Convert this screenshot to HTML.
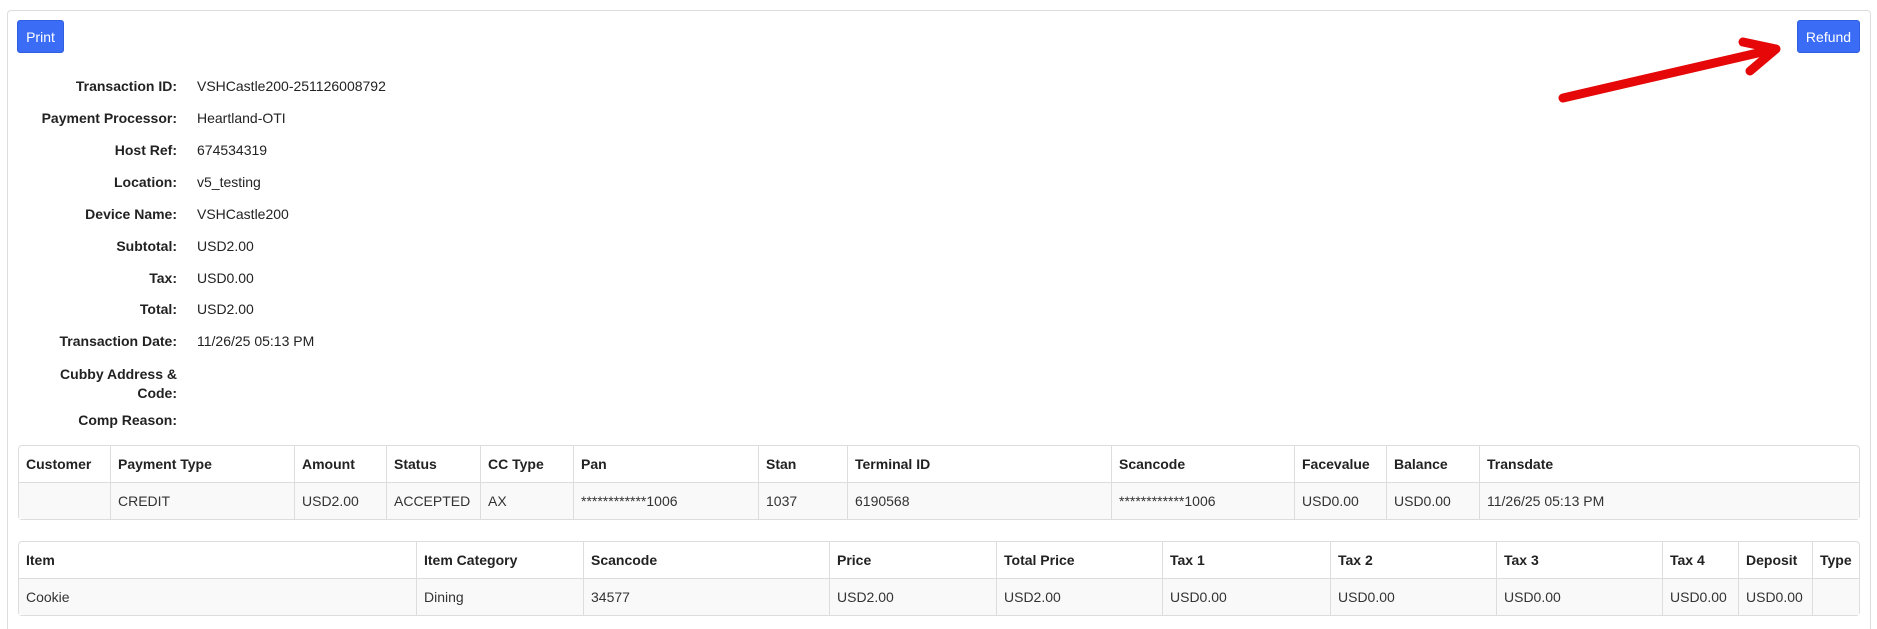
<!DOCTYPE html>
<html><head><style>
html,body{margin:0;width:1877px;height:629px;overflow:hidden}
body{background:#fff;font-family:"Liberation Sans",Arial,sans-serif;font-size:14px;color:#333;position:relative}
.box{position:absolute;left:7px;top:10px;width:1862px;height:630px;border:1px solid #ddd;border-radius:4px}
.btn{position:absolute;top:20px;height:33px;background:#3b6cf6;border:1px solid #2f5fe0;border-radius:3px;color:#fff;font-size:14px;line-height:33px;text-align:center;box-sizing:border-box}
.lab{position:absolute;right:1700px;font-weight:bold;text-align:right;color:#222}
.val{position:absolute;left:197px;color:#222}
table{position:absolute;left:18px;width:1842px;border-collapse:separate;border-spacing:0;border:1px solid #ddd;border-radius:4px;table-layout:fixed}
td,th{padding:0 7px;text-align:left;height:36px;box-sizing:border-box;border-left:1px solid #ddd;white-space:nowrap;overflow:hidden}
th:first-child,td:first-child{border-left:none}
th{font-weight:bold;color:#222}
td{background:#f9f9f9;border-top:1px solid #ddd;color:#333;height:37px}
</style></head><body>
<div class="box"></div>
<div class="btn" style="left:17px;width:47px">Print</div>
<div class="btn" style="left:1797px;width:63px">Refund</div>
<svg style="position:absolute;left:0;top:0" width="1877" height="629"><g stroke="#e60808" stroke-width="9" stroke-linecap="round" stroke-linejoin="round" fill="none"><path d="M1563 98 L1775 49"/><path d="M1743 42 L1776 49 L1750 71"/></g></svg>
<div class="lab" style="top:78px">Transaction ID:</div><div class="val" style="top:78px">VSHCastle200-251126008792</div>
<div class="lab" style="top:110px">Payment Processor:</div><div class="val" style="top:110px">Heartland-OTI</div>
<div class="lab" style="top:142px">Host Ref:</div><div class="val" style="top:142px">674534319</div>
<div class="lab" style="top:174px">Location:</div><div class="val" style="top:174px">v5_testing</div>
<div class="lab" style="top:206px">Device Name:</div><div class="val" style="top:206px">VSHCastle200</div>
<div class="lab" style="top:238px">Subtotal:</div><div class="val" style="top:238px">USD2.00</div>
<div class="lab" style="top:270px">Tax:</div><div class="val" style="top:270px">USD0.00</div>
<div class="lab" style="top:301px">Total:</div><div class="val" style="top:301px">USD2.00</div>
<div class="lab" style="top:333px">Transaction Date:</div><div class="val" style="top:333px">11/26/25 05:13 PM</div>
<div class="lab" style="top:365px;line-height:19px">Cubby Address &amp;<br>Code:</div>
<div class="lab" style="top:412px">Comp Reason:</div>
<table style="top:445px">
<colgroup><col style="width:91px"><col style="width:184px"><col style="width:92px"><col style="width:94px"><col style="width:93px"><col style="width:185px"><col style="width:89px"><col style="width:264px"><col style="width:183px"><col style="width:92px"><col style="width:93px"><col></colgroup>
<tr><th>Customer</th><th>Payment Type</th><th>Amount</th><th>Status</th><th>CC Type</th><th>Pan</th><th>Stan</th><th>Terminal ID</th><th>Scancode</th><th>Facevalue</th><th>Balance</th><th>Transdate</th></tr>
<tr><td></td><td>CREDIT</td><td>USD2.00</td><td>ACCEPTED</td><td>AX</td><td>************1006</td><td>1037</td><td>6190568</td><td>************1006</td><td>USD0.00</td><td>USD0.00</td><td>11/26/25 05:13 PM</td></tr>
</table>
<table style="top:541px">
<colgroup><col style="width:397px"><col style="width:167px"><col style="width:246px"><col style="width:167px"><col style="width:166px"><col style="width:168px"><col style="width:166px"><col style="width:166px"><col style="width:76px"><col style="width:74px"><col></colgroup>
<tr><th>Item</th><th>Item Category</th><th>Scancode</th><th>Price</th><th>Total Price</th><th>Tax 1</th><th>Tax 2</th><th>Tax 3</th><th>Tax 4</th><th>Deposit</th><th>Type</th></tr>
<tr><td>Cookie</td><td>Dining</td><td>34577</td><td>USD2.00</td><td>USD2.00</td><td>USD0.00</td><td>USD0.00</td><td>USD0.00</td><td>USD0.00</td><td>USD0.00</td><td></td></tr>
</table>
</body></html>
